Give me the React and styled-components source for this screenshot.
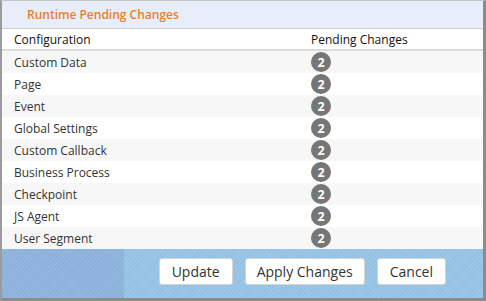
import React from "react";
import styled, { createGlobalStyle } from "styled-components";

const Global = createGlobalStyle`
  html, body { margin: 0; padding: 0; background: #fff; }
  body { font-family: "Open Sans", "Liberation Sans", sans-serif; }
`;

const Frame = styled.div`
  box-sizing: border-box;
  width: 486px;
  height: 301px;
  border-top: 1px solid #c6c6c6;
  border-left: 2px solid #9b9b9b;
  border-right: 3px solid #8c8c8c;
  border-bottom: 3px solid #8c8c8c;
  display: flex;
  flex-direction: column;
  background: #fff;
`;

const Title = styled.div`
  height: 27px;
  flex: none;
  display: flex;
  align-items: center;
  padding-left: 25px;
  background: #e8eef9;
  border-bottom: 1px solid #cfcfcf;
  color: #ef7d1f;
  font-size: 12px;
  font-weight: 600;
`;

const Grid = styled.div`
  display: grid;
  grid-template-columns: 297px 1fr;
  height: ${(p) => p.h}px;
  flex: none;
  align-items: center;
  background: ${(p) => p.bg};
  border-bottom: ${(p) => (p.line ? "2px solid #dcdcdc" : "none")};
  color: ${(p) => (p.head ? "#111" : "#333")};
  font-size: 12px;
`;

const Cell = styled.div`
  padding-left: ${(p) => p.pad}px;
  white-space: nowrap;
`;

const Badge = styled.span`
  display: inline-flex;
  align-items: center;
  justify-content: center;
  width: 20px;
  height: 20px;
  border-radius: 50%;
  background: #767676;
  color: #fff;
  font-weight: 700;
  font-size: 12.5px;
  vertical-align: middle;
`;

const Footer = styled.div`
  flex: 1;
  display: flex;
  justify-content: flex-end;
  align-items: flex-start;
  gap: 12px;
  padding: 9px 37px 0 0;
  background:
    repeating-linear-gradient(45deg, rgba(255,255,255,0.05) 0 1px, transparent 1px 3px),
    repeating-linear-gradient(-45deg, rgba(0,0,0,0.03) 0 1px, transparent 1px 3px),
    linear-gradient(to right, #8fb4de 0 122px, #98c5e6 122px);
`;

const Button = styled.button`
  box-sizing: border-box;
  height: 27px;
  padding: 0 ${(p) => p.px}px;
  background: #fff;
  border: 1px solid #d4d4d4;
  border-radius: 3px;
  font-family: "Open Sans", "Liberation Sans", sans-serif;
  font-size: 14px;
  color: #333;
`;

const items = [
  "Custom Data",
  "Page",
  "Event",
  "Global Settings",
  "Custom Callback",
  "Business Process",
  "Checkpoint",
  "JS Agent",
  "User Segment",
];

export default function App() {
  return (
    <>
      <Global />
      <Frame>
        <Title>Runtime Pending Changes</Title>
        <Grid h={20} bg="#fff" line head>
          <Cell pad={12}>Configuration</Cell>
          <Cell pad={12}>Pending Changes</Cell>
        </Grid>
        {items.map((name, i) => (
          <Grid key={name} h={22} bg={i % 2 === 0 ? "#f7f7f7" : "#fff"}>
            <Cell pad={12}>{name}</Cell>
            <Cell pad={12}>
              <Badge>2</Badge>
            </Cell>
          </Grid>
        ))}
        <Footer>
          <Button px={12}>Update</Button>
          <Button px={11}>Apply Changes</Button>
          <Button px={12}>Cancel</Button>
        </Footer>
      </Frame>
    </>
  );
}
